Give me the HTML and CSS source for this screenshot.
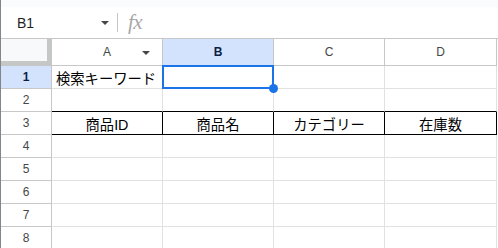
FILE: index.html
```html
<!DOCTYPE html>
<html lang="ja">
<head>
    <meta charset="UTF-8">
    <title>Sheet</title>
    <link rel="stylesheet" href="styles.css">
</head>
<body>

<div class="app">
    <div class="topStrip"></div>

    <div class="formulaBar">
        <div class="nameBox">
            <span class="cellRef">B1</span>
            <span class="caret"></span>
        </div>
        <div class="divider"></div>
        <span class="fx">fx</span>
    </div>

    <div class="sheet">
        <div class="corner"><div class="cornerInner"></div></div>
        <div class="colHead">A<span class="colMenu"></span></div>
        <div class="colHead active">B</div>
        <div class="colHead">C</div>
        <div class="colHead">D</div>

        <div class="rowHead active">1</div>
        <div class="cell">検索キーワード</div>
        <div class="cell selected"><span class="handle"></span></div>
        <div class="cell"></div>
        <div class="cell"></div>

        <div class="rowHead">2</div>
        <div class="cell edgeBottom"></div>
        <div class="cell edgeBottom"></div>
        <div class="cell edgeBottom"></div>
        <div class="cell edgeBottom"></div>

        <div class="rowHead">3</div>
        <div class="cell boxed center">商品ID</div>
        <div class="cell boxed center">商品名</div>
        <div class="cell boxed center">カテゴリー</div>
        <div class="cell boxed center">在庫数</div>

        <div class="rowHead">4</div>
        <div class="cell"></div><div class="cell"></div><div class="cell"></div><div class="cell"></div>
        <div class="rowHead">5</div>
        <div class="cell"></div><div class="cell"></div><div class="cell"></div><div class="cell"></div>
        <div class="rowHead">6</div>
        <div class="cell"></div><div class="cell"></div><div class="cell"></div><div class="cell"></div>
        <div class="rowHead">7</div>
        <div class="cell"></div><div class="cell"></div><div class="cell"></div><div class="cell"></div>
        <div class="rowHead">8</div>
        <div class="cell"></div><div class="cell"></div><div class="cell"></div><div class="cell"></div>
    </div>
</div>

</body>
</html>
```

FILE: styles.css
```css
body {
    margin: 0;
    padding: 0;
    background-color: #fff;
    font-family: "Liberation Sans", Arial, "Noto Sans CJK JP", sans-serif;
    color: #1f1f1f;
    overflow: hidden;
}

.app {
    width: 497px;
    height: 248px;
    border-left: 1px solid #80868b;
    overflow: hidden;
}

.topStrip {
    height: 7px;
    background-color: #f9fbfd;
}

.formulaBar {
    display: flex;
    align-items: center;
    height: 31px;
    border-bottom: 1px solid #c7c7c7;
}

.nameBox {
    display: flex;
    align-items: center;
    width: 108px;
    padding-left: 16px;
    box-sizing: border-box;
}

.cellRef {
    flex: 1;
    font-size: 14px;
    color: #1f1f1f;
}

.caret {
    width: 0;
    height: 0;
    border-left: 4px solid transparent;
    border-right: 4px solid transparent;
    border-top: 4px solid #444746;
}

.divider {
    width: 1px;
    height: 19px;
    margin-left: 8px;
    background-color: #c7c7c7;
}

.fx {
    margin-left: 10px;
    font-family: "Liberation Serif", serif;
    font-style: italic;
    font-size: 21px;
    line-height: 1;
    color: #a8a8a8;
    letter-spacing: -0.5px;
}

.sheet {
    display: grid;
    grid-template-columns: 51px repeat(3, 111px) 112px;
    grid-template-rows: 27px;
    grid-auto-rows: 23px;
}

.sheet > div {
    box-sizing: border-box;
}

.corner {
    background-color: #c4c7c5;
}

.cornerInner {
    width: 46px;
    height: 22px;
    background-color: #f8f9fa;
}

.colHead,
.rowHead {
    display: flex;
    align-items: center;
    justify-content: center;
    font-size: 12px;
    color: #444746;
    border-right: 1px solid #c7c7c7;
    border-bottom: 1px solid #c7c7c7;
}

.colHead {
    position: relative;
}

.colHead.active,
.rowHead.active {
    background-color: #d3e3fd;
    color: #0b1f44;
    font-weight: bold;
}

.colMenu {
    position: absolute;
    right: 12px;
    top: 12px;
    width: 0;
    height: 0;
    border-left: 4px solid transparent;
    border-right: 4px solid transparent;
    border-top: 4px solid #444746;
}

.cell {
    display: flex;
    align-items: center;
    padding-left: 4px;
    font-family: "Liberation Sans", "Noto Sans CJK JP", sans-serif;
    font-size: 14.3px;
    color: #000;
    white-space: nowrap;
    border-right: 1px solid #e1e1e1;
    border-bottom: 1px solid #e1e1e1;
}

.cell.center {
    justify-content: center;
    padding-left: 0;
}

.cell.edgeBottom {
    border-bottom-color: #000;
}

.cell.boxed {
    border-right-color: #000;
    border-bottom-color: #000;
}

.cell.selected {
    position: relative;
}

.cell.selected::after {
    content: "";
    position: absolute;
    left: -1px;
    top: -1px;
    right: -1px;
    bottom: -1px;
    border: 2px solid #1a73e8;
}

.handle {
    position: absolute;
    right: -5px;
    bottom: -5px;
    width: 9px;
    height: 9px;
    border-radius: 50%;
    background-color: #1a73e8;
    z-index: 1;
}
```
